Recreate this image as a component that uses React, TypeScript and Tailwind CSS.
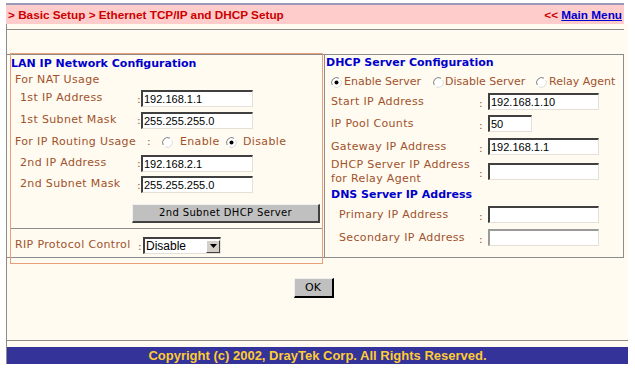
import React from 'react';

const labelFont = { fontFamily: '"DejaVu Sans", Verdana, sans-serif' };
const lbl = { fontFamily: '"DejaVu Sans", Verdana, sans-serif', letterSpacing: '0.35px' };

function Radio({ checked }: { checked?: boolean }) {
  return (
    <svg width="11" height="11" viewBox="0 0 11 11" className="shrink-0">
      <circle cx="5.5" cy="5.5" r="5" fill="#fff" />
      <path d="M1.2 8 A5 5 0 0 1 8 1.2" fill="none" stroke="#808080" strokeWidth="1" />
      <path d="M3 9.8 A5 5 0 0 0 9.8 3" fill="none" stroke="#dcdcdc" strokeWidth="1" />
      {checked && <circle cx="5.5" cy="5.5" r="2" fill="#000" />}
    </svg>
  );
}

function Field({ value, w = 'w-[112px]', dim }: { value?: string; w?: string; dim?: boolean }) {
  return (
    <input
      readOnly
      defaultValue={value}
      className={`${w} h-[17px] bg-white border-t-2 border-l-2 ${dim ? 'border-t-[#9a9a9a] border-l-[#9a9a9a]' : 'border-t-[#404040] border-l-[#404040]'} border-b border-r border-b-[#e4e0d8] border-r-[#e4e0d8] pl-[1px] text-[11px] leading-[13px] text-black outline-none font-['Liberation_Sans',Arial,sans-serif]`}
    />
  );
}

function LeftRow({ label, value, h }: { label: string; value: string; h: string }) {
  return (
    <div className={`flex items-center ${h} pl-[9px]`}>
      <span className="w-[117px] text-[#a0522d] text-[11px]" style={lbl}>{label}</span>
      <span className="w-[4px] text-[#a0522d] text-[11px] pt-[3px]" style={labelFont}>:</span>
      <Field value={value} />
    </div>
  );
}

function RightRow({ label, value, h, indent, w, dim }: { label: React.ReactNode; value?: string; h: string; indent?: boolean; w?: string; dim?: boolean }) {
  return (
    <div className={`flex items-center ${h} ${indent ? 'pl-[14px]' : 'pl-[6px]'}`}>
      <span className={`${indent ? 'w-[140px]' : 'w-[148px]'} text-[#a0522d] text-[11px] leading-[14px]`} style={lbl}>{label}</span>
      <span className="w-[9px] text-[#a0522d] text-[11px] pt-[5px]" style={labelFont}>:</span>
      <Field value={value} w={w ?? 'w-[111px]'} dim={dim} />
    </div>
  );
}

export default function App() {
  return (
    <div className="w-[635px] h-[372px] bg-white pt-[3px] pl-[6px] overflow-hidden">
      {/* Title bar */}
      <div className="w-[618px] h-[2px] bg-[#9a9ab8]" />
      <div className="w-[618px] h-[19px] bg-[#ffcccc] flex items-center justify-between pl-[2px] pr-[2px] font-['Liberation_Sans',Arial,sans-serif] font-bold text-[11.75px]">
        <span className="text-[#cc0000]">&gt; Basic Setup &gt; Ethernet TCP/IP and DHCP Setup</span>
        <span className="text-[#cc0000]">
          &lt;&lt; <a className="text-[#0000cc] underline" href="#">Main Menu</a>
        </span>
      </div>

      <div className="w-[622px] bg-[#fffbf0] border-l border-[#8c8c8c]">
        <div className="h-[5px] w-[618px]" />
        <div className="h-[1px] w-[617px] bg-[#8c8c8c]" />
        <div className="h-[24px]" />

        {/* Panels */}
        <div className="flex w-[617px] h-[204px] border-t border-b border-r border-[#8c8c8c]">
          <div className="w-[317px] shrink-0">
            <div className="ml-[3px] -mt-[2px] w-[313px] h-[211px] border border-[#e8a07a] pt-[1px]">
              <div className="h-[18px] flex items-center text-[#0000cc] text-[11px] font-bold" style={labelFont}>LAN IP Network Configuration</div>
              <div className="h-[15px] flex items-center pl-[4px] text-[#a0522d] text-[11px]" style={lbl}>For NAT Usage</div>
              <LeftRow label="1st IP Address" value="192.168.1.1" h="h-[21px]" />
              <LeftRow label="1st Subnet Mask" value="255.255.255.0" h="h-[22px]" />
              <div className="h-[22px] flex items-center pl-[4px] text-[#a0522d] text-[11px]" style={lbl}>
                <span className="w-[132px]">For IP Routing Usage</span>
                <span className="w-[15px]">:</span>
                <Radio />
                <span className="ml-[7px] w-[46px]">Enable</span>
                <Radio checked />
                <span className="ml-[6px]">Disable</span>
              </div>
              <LeftRow label="2nd IP Address" value="192.168.2.1" h="h-[20px]" />
              <LeftRow label="2nd Subnet Mask" value="255.255.255.0" h="h-[23px]" />
              <div className="h-[23px] pt-[2px] pl-[121px]">
                <button className="w-[188px] h-[19px] bg-[#c0c0c0] border-t border-l border-t-[#f0f0f0] border-l-[#f0f0f0] border-b-2 border-r-2 border-b-[#404040] border-r-[#404040] text-black text-[10px] leading-[15px]" style={lbl}>
                  2nd Subnet DHCP Server
                </button>
              </div>
              <div className="h-[9px]" />
              <div className="h-[1px] bg-[#8c8c8c]" />
              <div className="h-[33px] flex items-center pl-[4px]">
                <span className="w-[123px] text-[#a0522d] text-[11px]" style={lbl}>RIP Protocol Control</span>
                <span className="w-[5px] text-[#a0522d] text-[11px] pt-[3px]" style={labelFont}>:</span>
                <div className="w-[78px] h-[17px] bg-white border-t-2 border-l-2 border-t-[#404040] border-l-[#404040] border-b border-r border-b-[#e4e0d8] border-r-[#e4e0d8] flex items-center justify-between font-['Liberation_Sans',Arial,sans-serif] text-[12px] text-black">
                  <span className="pl-[1px] leading-[13px]">Disable</span>
                  <span className="w-[14px] h-[13px] bg-[#d4d0c8] border-t border-l border-t-white border-l-white border-b border-r border-b-[#404040] border-r-[#404040] flex items-center justify-center">
                    <svg width="7" height="4" viewBox="0 0 7 4"><path d="M0 0h7L3.5 4z" fill="#000" /></svg>
                  </span>
                </div>
              </div>
            </div>
          </div>

          <div className="flex-1 border-l border-[#8c8c8c]">
            <div className="h-[17px] flex items-center pl-[1px] text-[#0000cc] text-[11px] font-bold" style={labelFont}>DHCP Server Configuration</div>
            <div className="h-[20px] flex items-center pl-[6px] text-[#a0522d] text-[11px]" style={labelFont}>
              <Radio checked />
              <span className="ml-[2px] w-[89px]">Enable Server</span>
              <Radio />
              <span className="ml-[1px] w-[91px]">Disable Server</span>
              <Radio />
              <span className="ml-[2px]">Relay Agent</span>
            </div>
            <RightRow label="Start IP Address" value="192.168.1.10" h="h-[19px]" />
            <RightRow label="IP Pool Counts" value="50" h="h-[25px]" w="w-[44px]" />
            <RightRow label="Gateway IP Address" value="192.168.1.1" h="h-[21px]" />
            <RightRow label={<>DHCP Server IP Address<br />for Relay Agent</>} h="h-[29px]" />
            <div className="h-[19px] flex items-center pl-[6px] text-[#0000cc] text-[11px] font-bold" style={labelFont}>DNS Server IP Address</div>
            <RightRow label="Primary IP Address" h="h-[19px]" indent />
            <RightRow label="Secondary IP Address" h="h-[27px]" indent dim />
          </div>
        </div>

        {/* OK */}
        <div className="h-[20px]" />
        <div className="flex justify-center w-[617px] pr-[4px]">
          <button className="w-[40px] h-[20px] bg-[#c0c0c0] border-t border-l border-t-[#f0f0f0] border-l-[#f0f0f0] border-b-2 border-r-2 border-b-black border-r-black text-black text-[11px] leading-[16px]" style={labelFont}>
            OK
          </button>
        </div>
        <div className="h-[42px]" />
        <div className="h-[1px] w-[621px] bg-[#8c8c8c]" />
        <div className="h-[6px]" />
        <div className="h-[17px] w-[621px] bg-[#333399] flex items-center justify-center text-[#ffcc33] text-[13px] font-bold font-['Liberation_Sans',Arial,sans-serif]">
          Copyright (c) 2002, DrayTek Corp. All Rights Reserved.
        </div>
      </div>
    </div>
  );
}
